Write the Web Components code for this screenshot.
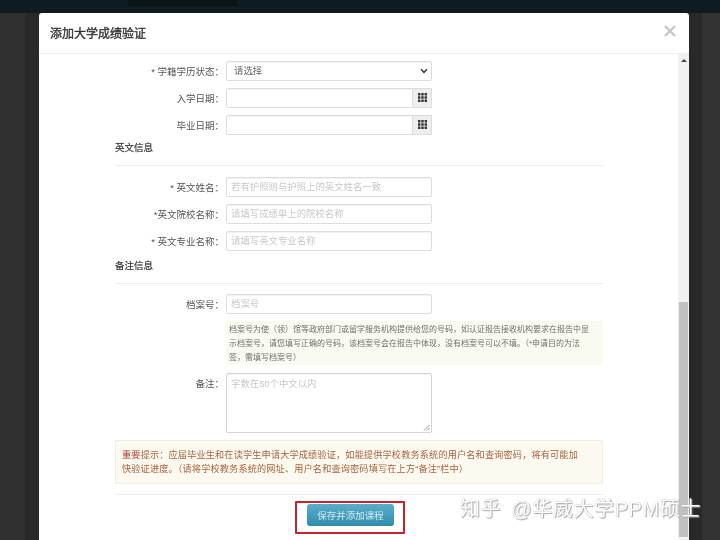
<!DOCTYPE html>
<html lang="zh">
<head>
<meta charset="utf-8">
<style>
    html, body {margin: 0; height: 540px; overflow: hidden; background: #2f2f2f;}
    body {font-family: "Liberation Sans", "Noto Sans CJK SC", sans-serif; font-size: 9px; color: #555;}
</style>
</head>
<body>
<x-page>
    <x-modal heading="添加大学成绩验证">
        <x-row label="学籍学历状态" star="* " kind="select" value="请选择"></x-row>
        <x-row label="入学日期" kind="date"></x-row>
        <x-row label="毕业日期" kind="date"></x-row>
        <x-section heading="英文信息" top="-1" gap="11"></x-section>
        <x-row label="英文姓名" star="* " hint="若有护照则与护照上的英文姓名一致"></x-row>
        <x-row label="英文院校名称" star="*" hint="请填写成绩单上的院校名称"></x-row>
        <x-row label="英文专业名称" star="* " hint="请填写英文专业名称"></x-row>
        <x-section heading="备注信息" top="1" gap="10"></x-section>
        <x-row label="档案号" hint="档案号"></x-row>
        <x-note>档案号为使（领）馆等政府部门或留学服务机构提供给您的号码，如认证报告接收机构要求在报告中显示档案号，请您填写正确的号码，该档案号会在报告中体现，没有档案号可以不填。（*申请目的为法签，需填写档案号）</x-note>
        <x-row label="备注" kind="area" hint="字数在50个中文以内"></x-row>
        <x-warning><b>重要</b>提示：应届毕业生和在读学生申请大学成绩验证，如能提供学校教务系统的用户名和查询密码，将有可能加<br>快验证进度。（请将学校教务系统的网址、用户名和查询密码填写在上方“备注”栏中）</x-warning>
        <x-save>保存并添加课程</x-save>
    </x-modal>
    <x-mark>知乎 @华威大学PPM硕士</x-mark>
</x-page>

<script>
"use strict";

class Page extends HTMLElement {
    constructor() {
        super();
        this.attachShadow({mode: "open"}).innerHTML = `
            <style>
                :host {display: flex; flex-direction: column; height: 540px; position: relative; overflow: hidden;
                    background: linear-gradient(90deg, #303030 0 25px, #292929 25px 702px, #323232 702px);
                    filter: blur(.35px);}
                .top {height: 13px; flex: none; background: #0e1b21; display: flex;}
                .top i {display: block; width: 110px; margin-left: 128px; height: 6px; background: #0a1317;}
                .wrap {flex: 1; min-height: 0; padding-left: 39px;}
            </style>
            <div class="top"><i></i></div>
            <div class="wrap"><slot></slot></div>
        `;
    }
}

class Modal extends HTMLElement {
    constructor() {
        super();
        this.attachShadow({mode: "open"}).innerHTML = `
            <style>
                :host {display: flex; flex-direction: column; width: 650px; height: 527px; background: #fff; border-radius: 3px 3px 0 0; overflow: hidden;}
                header {height: 41px; flex: none; box-sizing: border-box; border-bottom: 1px solid #eee; display: flex; justify-content: space-between; padding: 13px 13px 0 11px;}
                h2 {margin: 0; font-size: 12px; line-height: 17px; font-weight: 400; color: #333; -webkit-text-stroke: .35px #333;}
                svg {margin-top: -1px;}
                .main {flex: 1; min-height: 0; display: flex;}
                .body {flex: 1; min-width: 0; padding: 7px 75px 0 76px; display: flex; flex-direction: column;}
                .bar {width: 11px; flex: none; background: #f1f1f1; display: flex; flex-direction: column; align-items: stretch;}
                .arrow {height: 0; width: 0; border: 3px solid transparent; border-bottom: 3px solid #444; border-top: 0; margin: 5px auto 0;}
                .thumb {margin-top: 240px; height: 235px; background: #c1c1c1; margin-left: 1px; margin-right: 1px;}
            </style>
            <header><h2></h2>
                <svg width="12" height="12" viewBox="0 0 12 12"><path d="M1 1 11 11M11 1 1 11" stroke="#c6c6c6" stroke-width="2.2" fill="none"/></svg>
            </header>
            <div class="main">
                <div class="body"><slot></slot></div>
                <div class="bar"><div class="arrow"></div><div class="thumb"></div></div>
            </div>
        `;
    }
    connectedCallback() {
        this.shadowRoot.querySelector("h2").textContent = this.getAttribute("heading");
    }
}

class Row extends HTMLElement {
    constructor() {
        super();
        this.attachShadow({mode: "open"});
    }
    connectedCallback() {
        const kind = this.getAttribute("kind") || "text";
        const hint = this.getAttribute("hint") || "";
        const star = this.getAttribute("star") || "";
        const label = this.getAttribute("label");
        let field = `<div class="box">${hint ? `<span class="hint">${hint}</span>` : ""}</div>`;
        if (kind === "select") {
            field = `<div class="box sel"><span>${this.getAttribute("value")}</span>
                <svg width="8" height="6" viewBox="0 0 8 6"><path d="M1 1.2 4 4.4 7 1.2" fill="none" stroke="#333" stroke-width="1.5"/></svg></div>`;
        }
        if (kind === "date") {
            field = `<div class="date"><div class="box"></div><div class="add">
                <svg width="9" height="9" viewBox="0 0 9 9" fill="#333"><path d="M0 0h2.4v2.4H0zM3.3 0h2.4v2.4H3.3zM6.6 0H9v2.4H6.6zM0 3.3h2.4v2.4H0zM3.3 3.3h2.4v2.4H3.3zM6.6 3.3H9v2.4H6.6zM0 6.6h2.4V9H0zM3.3 6.6h2.4V9H3.3zM6.6 6.6H9V9H6.6z"/></svg>
            </div></div>`;
        }
        if (kind === "area") {
            field = `<div class="box area"><span class="hint">${hint}</span>
                <svg class="grip" width="7" height="7" viewBox="0 0 7 7"><path d="M6.5 1 1 6.5M6.5 4 4 6.5" stroke="#777" stroke-width=".8"/></svg></div>`;
        }
        this.shadowRoot.innerHTML = `
            <style>
                :host {display: grid; grid-template-columns: 109px 206px; column-gap: 2px; margin-bottom: 7px;}
                label {text-align: right; font-size: 9.5px; line-height: 20px; height: 20px; color: #555; white-space: nowrap;}
                label span {font-family: "Noto Sans CJK TC", sans-serif;}
                .box {box-sizing: border-box; height: 20px; border: 1px solid #ddd; border-radius: 2px; background: #fff; padding: 0 4px; font-size: 9.4px; line-height: 18px; color: #666; box-shadow: inset 0 1px 1px #f2f2f2; position: relative; white-space: nowrap;}
                .hint {color: #c8c8c8;}
                .sel {display: flex; justify-content: space-between; align-items: center; padding: 0 3px 0 7px;}
                .date {display: flex;}
                .date .box {flex: 1; border-radius: 2px 0 0 2px;}
                .add {width: 19px; box-sizing: border-box; height: 20px; background: #eee; border: 1px solid #ddd; border-left: 0; display: flex; align-items: center; justify-content: center; padding-bottom: 1px;}
                .area {height: 60px; padding-top: 1px; border-color: #d4d4dc;}
                .grip {position: absolute; right: 1px; bottom: 1px;}
            </style>
            <label>${star}${label}<span>：</span></label>
            ${field}
        `;
    }
}

class Section extends HTMLElement {
    constructor() {
        super();
        this.attachShadow({mode: "open"});
    }
    connectedCallback() {
        const top = this.getAttribute("top") || 0;
        const gap = this.getAttribute("gap") || 10;
        this.shadowRoot.innerHTML = `
            <style>
                :host {display: block; margin-top: ${top}px; margin-bottom: ${gap}px; height: 25px; box-sizing: border-box; border-bottom: 1px solid #eee;}
                div {font-size: 9.5px; line-height: 14px; color: #333; -webkit-text-stroke: .2px #333;}
            </style>
            <div>${this.getAttribute("heading")}</div>
        `;
    }
}

class Note extends HTMLElement {
    constructor() {
        super();
        this.attachShadow({mode: "open"}).innerHTML = `
            <style>
                :host {display: block; margin: 0 0 8px 111px; height: 45px; box-sizing: border-box; padding: 2px 12px 0 3px; background: #fafbf0; font-size: 8px; line-height: 14px; color: #707070;}
            </style>
            <slot></slot>
        `;
    }
}

class Warning extends HTMLElement {
    constructor() {
        super();
        this.attachShadow({mode: "open"}).innerHTML = `
            <style>
                :host {display: block; height: 44px; box-sizing: border-box; border: 1px solid #f0eedd; background: #fcfaf0; padding: 7px 4px 0 6px; font-size: 9.15px; letter-spacing: .18px; line-height: 14px; color: #a9623c; border-radius: 1px; white-space: nowrap;}
                ::slotted(b) {color: #a53c22; font-weight: 400;}
            </style>
            <slot></slot>
        `;
    }
}

class Save extends HTMLElement {
    constructor() {
        super();
        this.attachShadow({mode: "open"}).innerHTML = `
            <style>
                :host {display: block; margin-top: 10px; border-top: 1px solid #eee; padding-top: 9px; height: 46px; box-sizing: border-box;}
                .cell {display: flex; justify-content: center; position: relative; padding-right: 17px;}
                button {width: 87px; height: 22px; border: 0; border-radius: 3px; background: linear-gradient(#5aaecb, #2f8cad); color: #d0ebf2; font-family: inherit; font-size: 9.5px; padding: 0;}
                .red {position: absolute; left: 180px; top: -3px; width: 110px; height: 33px; box-sizing: border-box; border: 2px solid #c4242c; border-radius: 1px;}
            </style>
            <div class="cell"><button><slot></slot></button><div class="red"></div></div>
        `;
    }
}

class Mark extends HTMLElement {
    constructor() {
        super();
        this.attachShadow({mode: "open"}).innerHTML = `
            <style>
                :host {position: absolute; left: 460px; top: 495px; font-size: 20px; line-height: 28px; letter-spacing: .6px; word-spacing: 4px; white-space: nowrap; color: #fff; text-shadow: 0 0 1px #999, 1px 1px 1px #aaa;}
            </style>
            <slot></slot>
        `;
    }
}

customElements.define("x-page", Page);
customElements.define("x-modal", Modal);
customElements.define("x-row", Row);
customElements.define("x-section", Section);
customElements.define("x-note", Note);
customElements.define("x-warning", Warning);
customElements.define("x-save", Save);
customElements.define("x-mark", Mark);
</script>
</body>
</html>
